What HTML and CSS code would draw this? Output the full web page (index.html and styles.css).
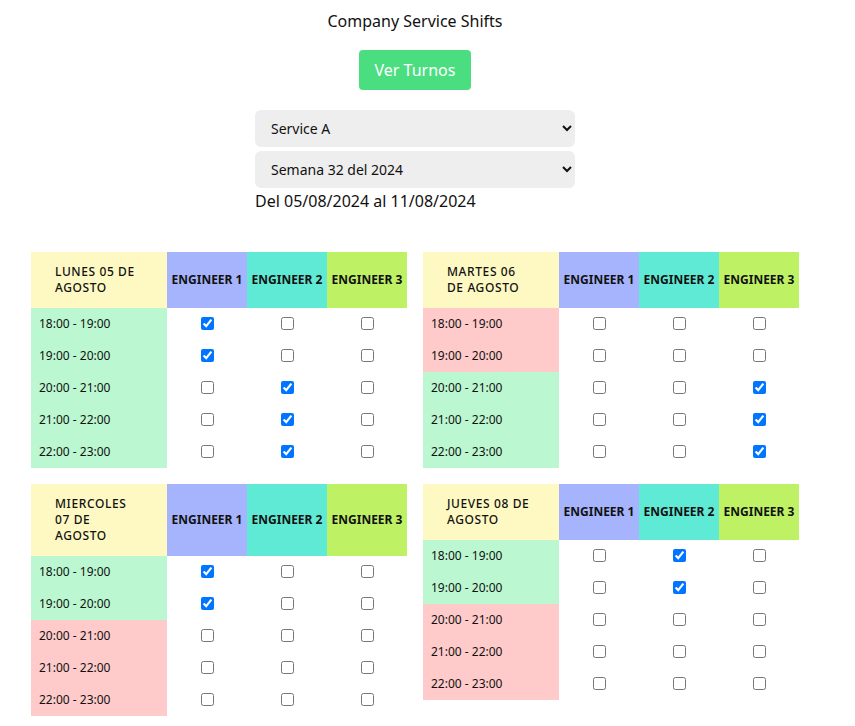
FILE: index.html
```html
<!DOCTYPE html>
<html lang="es">
<head>
<meta charset="utf-8">
<title>Company Service Shifts</title>
<link rel="stylesheet" href="styles.css">
</head>
<body>
<div class="page">
  <h1 class="title">Company Service Shifts</h1>
  <button class="btn">Ver Turnos</button>
  <div class="filters">
    <select class="sel"><option>Service A</option></select>
    <select class="sel"><option>Semana 32 del 2024</option></select>
    <div class="range">Del 05/08/2024 al 11/08/2024</div>
  </div>
  <div class="grid">
    <table class="day">
      <thead><tr><th class="dh">LUNES 05 DE AGOSTO</th><th class="e1">ENGINEER 1</th><th class="e2">ENGINEER 2</th><th class="e3">ENGINEER 3</th></tr></thead>
      <tbody>
        <tr><td class="t ok">18:00 - 19:00</td><td><input type="checkbox" checked></td><td><input type="checkbox"></td><td><input type="checkbox"></td></tr>
        <tr><td class="t ok">19:00 - 20:00</td><td><input type="checkbox" checked></td><td><input type="checkbox"></td><td><input type="checkbox"></td></tr>
        <tr><td class="t ok">20:00 - 21:00</td><td><input type="checkbox"></td><td><input type="checkbox" checked></td><td><input type="checkbox"></td></tr>
        <tr><td class="t ok">21:00 - 22:00</td><td><input type="checkbox"></td><td><input type="checkbox" checked></td><td><input type="checkbox"></td></tr>
        <tr><td class="t ok">22:00 - 23:00</td><td><input type="checkbox"></td><td><input type="checkbox" checked></td><td><input type="checkbox"></td></tr>
      </tbody>
    </table>
    <table class="day">
      <thead><tr><th class="dh">MARTES 06 DE AGOSTO</th><th class="e1">ENGINEER 1</th><th class="e2">ENGINEER 2</th><th class="e3">ENGINEER 3</th></tr></thead>
      <tbody>
        <tr><td class="t bad">18:00 - 19:00</td><td><input type="checkbox"></td><td><input type="checkbox"></td><td><input type="checkbox"></td></tr>
        <tr><td class="t bad">19:00 - 20:00</td><td><input type="checkbox"></td><td><input type="checkbox"></td><td><input type="checkbox"></td></tr>
        <tr><td class="t ok">20:00 - 21:00</td><td><input type="checkbox"></td><td><input type="checkbox"></td><td><input type="checkbox" checked></td></tr>
        <tr><td class="t ok">21:00 - 22:00</td><td><input type="checkbox"></td><td><input type="checkbox"></td><td><input type="checkbox" checked></td></tr>
        <tr><td class="t ok">22:00 - 23:00</td><td><input type="checkbox"></td><td><input type="checkbox"></td><td><input type="checkbox" checked></td></tr>
      </tbody>
    </table>
    <table class="day">
      <thead><tr><th class="dh">MIERCOLES 07 DE AGOSTO</th><th class="e1">ENGINEER 1</th><th class="e2">ENGINEER 2</th><th class="e3">ENGINEER 3</th></tr></thead>
      <tbody>
        <tr><td class="t ok">18:00 - 19:00</td><td><input type="checkbox" checked></td><td><input type="checkbox"></td><td><input type="checkbox"></td></tr>
        <tr><td class="t ok">19:00 - 20:00</td><td><input type="checkbox" checked></td><td><input type="checkbox"></td><td><input type="checkbox"></td></tr>
        <tr><td class="t bad">20:00 - 21:00</td><td><input type="checkbox"></td><td><input type="checkbox"></td><td><input type="checkbox"></td></tr>
        <tr><td class="t bad">21:00 - 22:00</td><td><input type="checkbox"></td><td><input type="checkbox"></td><td><input type="checkbox"></td></tr>
        <tr><td class="t bad">22:00 - 23:00</td><td><input type="checkbox"></td><td><input type="checkbox"></td><td><input type="checkbox"></td></tr>
      </tbody>
    </table>
    <table class="day">
      <thead><tr><th class="dh">JUEVES 08 DE AGOSTO</th><th class="e1">ENGINEER 1</th><th class="e2">ENGINEER 2</th><th class="e3">ENGINEER 3</th></tr></thead>
      <tbody>
        <tr><td class="t ok">18:00 - 19:00</td><td><input type="checkbox"></td><td><input type="checkbox" checked></td><td><input type="checkbox"></td></tr>
        <tr><td class="t ok">19:00 - 20:00</td><td><input type="checkbox"></td><td><input type="checkbox" checked></td><td><input type="checkbox"></td></tr>
        <tr><td class="t bad">20:00 - 21:00</td><td><input type="checkbox"></td><td><input type="checkbox"></td><td><input type="checkbox"></td></tr>
        <tr><td class="t bad">21:00 - 22:00</td><td><input type="checkbox"></td><td><input type="checkbox"></td><td><input type="checkbox"></td></tr>
        <tr><td class="t bad">22:00 - 23:00</td><td><input type="checkbox"></td><td><input type="checkbox"></td><td><input type="checkbox"></td></tr>
      </tbody>
    </table>
  </div>
</div>
</body>
</html>
```
FILE: styles.css
```css
html, body {
  margin: 0;
  padding: 0;
  background: #ffffff;
}
body {
  font-family: "Noto Sans", "Open Sans", sans-serif;
  color: #111111;
}
.page {
  width: 830px;
  display: flex;
  flex-direction: column;
  align-items: center;
  padding-top: 10px;
}
.title {
  margin: 0;
  font-size: 16px;
  font-weight: 400;
  line-height: 22px;
}
.btn {
  margin-top: 18px;
  height: 40px;
  width: 112px;
  padding: 0;
  border: none;
  border-radius: 4px;
  background: #4ade80;
  color: #ffffff;
  font-family: inherit;
  font-size: 16px;
  white-space: nowrap;
}
.filters {
  margin-top: 20px;
  width: 320px;
  display: flex;
  flex-direction: column;
  gap: 4px;
}
.sel {
  height: 37px;
  width: 320px;
  border: none;
  border-radius: 6px;
  background-color: #eeeeee;
  padding: 0 8px 0 12px;
  font-family: inherit;
  font-size: 14px;
  color: #111111;
}
.range {
  margin-top: -3px;
  font-size: 16px;
  line-height: 24px;
}
.grid {
  margin-top: 39px;
  display: grid;
  grid-template-columns: 376px 376px;
  column-gap: 16px;
  row-gap: 16px;
  align-items: start;
}
.day {
  border-collapse: collapse;
  table-layout: fixed;
  width: 376px;
}
.day th, .day td {
  padding: 0;
}
.dh {
  width: 136px;
  background: #fef9c3;
  text-align: left;
  padding: 12px 24px !important;
  font-size: 12px;
  font-weight: 500;
  letter-spacing: 0.05em;
  line-height: 16px;
  box-sizing: border-box;
  height: 56px;
}
.e1, .e2, .e3 {
  width: 80px;
  font-size: 12px;
  font-weight: 700;
  line-height: 16px;
  text-align: center;
  white-space: nowrap;
}
.e1 { background: #a5b4fc; }
.e2 { background: #5eead4; }
.e3 { background: #bef264; }
.day td {
  height: 32px;
  text-align: center;
  vertical-align: middle;
}
.day td input {
  margin: 0 0 4px 0;
  vertical-align: middle;
}
.day td.t {
  text-align: left;
  padding-left: 8px;
  font-size: 12px;
  line-height: 16px;
}
.ok { background: #bbf7d0; }
.bad { background: #fecaca; }
```
